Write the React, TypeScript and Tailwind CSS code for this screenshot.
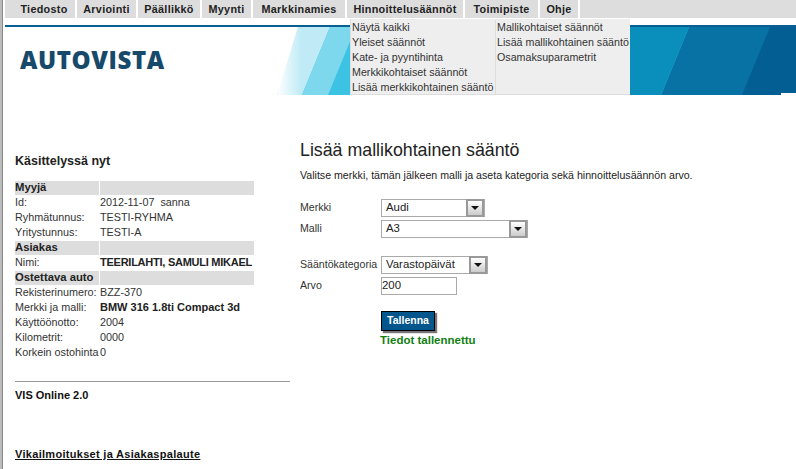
import React from 'react'

const topMenu = [
  { label: 'Tiedosto', width: 'w-[64px]' },
  { label: 'Arviointi', width: 'w-[61px]' },
  { label: 'Päällikkö', width: 'w-[64px]' },
  { label: 'Myynti', width: 'w-[51px]' },
  { label: 'Markkinamies', width: 'w-[94px]' },
  { label: 'Hinnoittelusäännöt', width: 'w-[118px]' },
  { label: 'Toimipiste', width: 'w-[75px]' },
  { label: 'Ohje', width: 'w-[40px]' },
]
const subMenuLeft = ['Näytä kaikki', 'Yleiset säännöt', 'Kate- ja pyyntihinta', 'Merkkikohtaiset säännöt', 'Lisää merkkikohtainen sääntö']
const subMenuRight = ['Mallikohtaiset säännöt', 'Lisää mallikohtainen sääntö', 'Osamaksuparametrit']

type Row = { head?: boolean; label: string; value?: string; bold?: boolean; tight?: boolean }

const rows: Row[] = [
  { head: true, label: 'Myyjä' },
  { label: 'Id:', value: '2012-11-07\u00a0 sanna' },
  { label: 'Ryhmätunnus:', value: 'TESTI-RYHMA' },
  { label: 'Yritystunnus:', value: 'TESTI-A' },
  { head: true, label: 'Asiakas' },
  { label: 'Nimi:', value: 'TEERILAHTI, SAMULI MIKAEL', bold: true, tight: true },
  { head: true, label: 'Ostettava auto' },
  { label: 'Rekisterinumero:', value: 'BZZ-370' },
  { label: 'Merkki ja malli:', value: 'BMW 316 1.8ti Compact 3d', bold: true },
  { label: 'Käyttöönotto:', value: '2004' },
  { label: 'Kilometrit:', value: '0000' },
  { label: 'Korkein ostohinta', value: '0' },
]

function FakeSelect({ value, width }: { value: string; width: string }) {
  return (
    <div className={`flex h-[18px] items-center justify-between border border-[#aaa] bg-white pl-1 ${width}`}>
      <span className="text-[11.4px] text-[#222]">{value}</span>
      <div className="flex h-[18px] w-[18px] items-center justify-center border-2 border-[#999] bg-gradient-to-b from-white to-[#ccc]">
        <svg width="8" height="4" viewBox="0 0 8 4">
          <path d="M0 0h8L4 4z" fill="#111" />
        </svg>
      </div>
    </div>
  )
}

function Banner() {
  return (
    <svg width="519" height="68" viewBox="0 0 519 68" className="block">
      <defs>
        <linearGradient id="fade" x1="0" x2="1" y1="0" y2="0">
          <stop offset="0" stopColor="#ffffff" />
          <stop offset="0.45" stopColor="#c0ebf6" />
          <stop offset="1" stopColor="#c0ebf6" />
        </linearGradient>
      </defs>
      <rect width="519" height="68" fill="#3cc3e4" />
      <path d="M0 68L28 0H0z" fill="#fff" />
      <path d="M0 68L21 0h32L25 68z" fill="url(#fade)" />
      <path d="M25 68L53 0h26L51 68z" fill="#7dd8ee" />
      <path d="M384 68L412 0h107v68z" fill="#0872a5" />
      <path d="M340 0h72l-28 68h-44z" fill="#0a8fbd" />
      <path d="M465 68L493 0h26v68z" fill="#035e94" />
      <rect x="504" y="66" width="15" height="2" fill="#fff" />
    </svg>
  )
}

export default function App() {
  return (
    <div className="relative flex h-[469px] w-[796px] overflow-hidden bg-white font-['Liberation_Sans',Arial,sans-serif] text-[11px] text-[#333]">
      <div className="w-[3px] shrink-0 border-r border-[#888] bg-[#bbb]" />

      <div className="ml-[2px] flex min-w-0 flex-1 flex-col">
        {/* Top menu */}
        <div className="flex h-[18px] bg-[#ddd] pl-2">
          {topMenu.map((item) => (
            <div
              key={item.label}
              className={`flex items-center justify-center border-r-2 border-white text-[10.8px] font-bold tracking-[0.3px] text-[#222] ${item.width}`}
            >
              {item.label}
            </div>
          ))}
        </div>

        {/* Logo + banner */}
        <div className="mt-[7px] flex h-[70px] justify-between border-t-2 border-[#0a5f92]">
          <div className="pl-[15px] pt-[20px] font-['Open_Sans',sans-serif] text-[24px] leading-[26px] font-extrabold tracking-[0.6px] text-[#17496b]">
            AUTOVISTA
          </div>
          <Banner />
        </div>

        <div className="mt-[58px] flex">
          {/* Left column */}
          <div className="w-[285px] shrink-0">
            <div className="pl-[10px]">
              <h3 className="text-[12.5px] leading-[16px] font-bold text-[#222]">Käsittelyssä nyt</h3>
              <div className="mt-[11px] w-[239px] text-[10.8px]">
                {rows.map((row) =>
                  row.head ? (
                    <div key={row.label} className="flex h-[15px] items-center">
                      <div className="flex h-[14px] w-[84px] items-center bg-[#ddd] text-[11.3px] font-bold text-[#222]">
                        {row.label}
                      </div>
                      <div className="ml-px h-[14px] flex-1 bg-[#ddd]" />
                    </div>
                  ) : (
                    <div key={row.label} className="flex h-[15px] items-center">
                      <div className="w-[85px] shrink-0 whitespace-nowrap">{row.label}</div>
                      <div
                        className={`whitespace-nowrap ${row.bold ? 'text-[11px] font-bold text-[#222]' : ''} ${row.tight ? 'tracking-[-0.25px]' : ''}`}
                      >
                        {row.value}
                      </div>
                    </div>
                  )
                )}
              </div>
              <div className="mt-[21px] h-px bg-[#999]" />
              <div className="mt-[7px] text-[11px] leading-[13px] font-bold text-[#111]">VIS Online 2.0</div>
              <div className="mt-[46px] text-[11px] leading-[13px] font-bold tracking-[0.3px] text-[#111] underline">
                Vikailmoitukset ja Asiakaspalaute
              </div>
            </div>
          </div>

          {/* Form */}
          <div className="pl-[10px]">
            <h1 className="mt-[-13px] text-[17.8px] leading-[21px] text-[#222]">Lisää mallikohtainen sääntö</h1>
            <p className="mt-[8px] text-[10.62px] leading-[13px] text-[#222]">
              Valitse merkki, tämän jälkeen malli ja aseta kategoria sekä hinnoittelusäännön arvo.
            </p>

            <div className="mt-[17px] grid grid-cols-[81px_1fr] items-center gap-y-[3px] text-[10.6px]">
              <div>Merkki</div>
              <FakeSelect value="Audi" width="w-[104px]" />
              <div>Malli</div>
              <FakeSelect value="A3" width="w-[147px]" />
              <div className="col-span-2 h-[12px]" />
              <div>Sääntökategoria</div>
              <FakeSelect value="Varastopäivät" width="w-[107px]" />
              <div>Arvo</div>
              <div className="flex h-[18px] w-[76px] items-center border border-[#aaa] bg-white text-[11.4px] text-[#222]">
                200
              </div>
            </div>

            <div className="ml-[81px] mt-[16px]">
              <button className="h-[20px] w-[54px] border border-black bg-[#02568c] text-[10.5px] font-bold text-white shadow-[2px_2px_1px_#777]">
                Tallenna
              </button>
              <div className="ml-[-1px] mt-[3px] text-[11.5px] leading-[13px] font-bold text-[#118011]">Tiedot tallennettu</div>
            </div>
          </div>
        </div>
      </div>

      {/* Open submenu */}
      <div className="absolute left-[350px] top-[19px] flex h-[76px] w-[280px] border-b border-l border-[#ddd] bg-[#eee] pt-px text-[10.7px] text-[#333]">
        <div className="w-[145px] border-r border-[#ddd] pl-[1px]">
          {subMenuLeft.map((item) => (
            <div key={item} className="h-[15px] leading-[15px] whitespace-nowrap">{item}</div>
          ))}
        </div>
        <div className="pl-[1px]">
          {subMenuRight.map((item) => (
            <div key={item} className="h-[15px] leading-[15px] whitespace-nowrap">{item}</div>
          ))}
        </div>
      </div>
    </div>
  )
}
